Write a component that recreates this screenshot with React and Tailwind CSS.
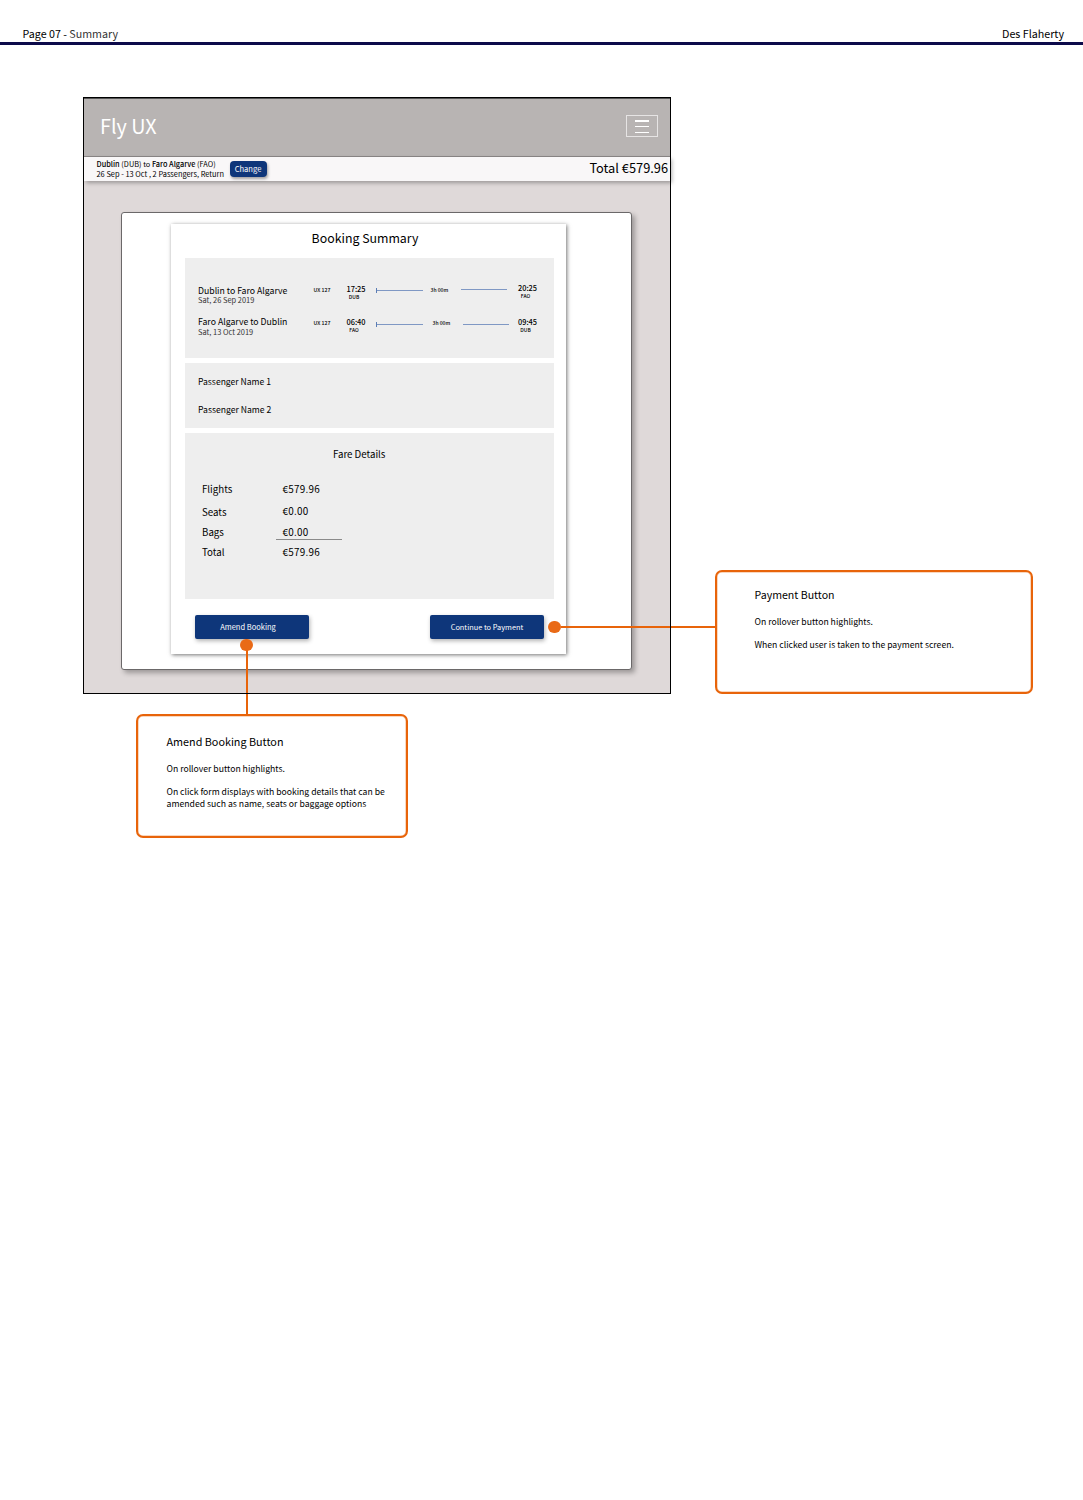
function T({ className = "", children }) {
  return <div className={`whitespace-nowrap leading-[12px] ${className}`}>{children}</div>;
}

function Leg({ name, date, dateGap, from, fromCode, to, toCode, nums }) {
  return (
    <div className="flex h-[24px] items-start">
      <div className="w-[115.5px]">
        <T className={`text-[8.71px] ${nums.name}`}>{name}</T>
        <T className={`text-[7.45px] text-[#333] ${dateGap}`}>{date}</T>
      </div>
      <T className={`w-[31px] text-[5.19px] font-medium ${nums.code}`}>UX 127</T>
      <div className={`flex w-[23px] flex-col items-center ${nums.dep}`}>
        <T className="text-[7.4px] font-medium">{from}</T>
        <T className={`-ml-1 text-[4.95px] font-medium ${nums.depCode}`}>{fromCode}</T>
      </div>
      <div className={`ml-[8px] flex h-[5px] w-[47px] items-center border-l border-[#5b7db5] ${nums.line1}`}>
        <div className="h-px w-full bg-[#7f98c4]" />
      </div>
      <T className={`w-[30px] text-[5.06px] font-medium ${nums.dur}`}>3h 00m</T>
      <div className={`h-px w-[46px] bg-[#7f98c4] ${nums.line2}`} />
      <div className={`flex w-[22px] flex-col items-center ${nums.arr}`}>
        <T className="text-[7.4px] font-medium">{to}</T>
        <T className={`-ml-1 text-[4.95px] font-medium ${nums.arrCode}`}>{toCode}</T>
      </div>
    </div>
  );
}

function Fare({ label, amount, className = "", amountClass = "" }) {
  return (
    <div className={`flex h-[12px] ${className}`}>
      <T className="w-[80.5px] text-[9.73px]">{label}</T>
      <T className={`text-[9.9px] tracking-[0.25px] ${amountClass}`}>{amount}</T>
    </div>
  );
}

export default function App() {
  return (
    <div className="h-[1500px] w-[1083px] overflow-hidden bg-white font-['Noto_Sans_CJK_SC','Noto_Sans',sans-serif] text-black">
      <header className="flex h-[45px] items-start justify-between border-b-[3px] border-[#0c0a4a] pr-[19px] pl-[22.5px] pt-[28px]">
        <T className="text-[10.7px]">Page 07 - <span className="text-[#333]">Summary</span></T>
        <T className="text-[10.72px]">Des Flaherty</T>
      </header>

      <div className="mt-[52px] flex items-start pl-[83px]">
        <main className="relative h-[597px] w-[588px] shrink-0 border border-black bg-[#dfd9d9]">
          <div className="pointer-events-none absolute -inset-px z-20 border border-black" />
          <div className="flex h-[59px] items-start justify-between border-t border-b border-t-[#555] border-b-[#8c8888] bg-[#b8b4b3] pr-[12px] pl-[16px]">
            <div className="mt-[12px] text-[19.8px] leading-[30px] whitespace-nowrap text-white">Fly UX</div>
            <div className="mt-[16px] flex h-[22px] w-[32px] flex-col items-center justify-between border border-[#e6e4e4] pt-[4px] pb-[3px]">
              <div className="h-[1.5px] w-[14px] bg-white" />
              <div className="h-[1.5px] w-[14px] bg-white" />
              <div className="h-[1.5px] w-[14px] bg-white" />
            </div>
          </div>
          <div className="flex h-[24px] items-start bg-[#f9f7f8] pl-[12.5px] shadow-[2px_2px_4px_rgba(0,0,0,0.3)]">
            <div className="w-[133px] pt-[1px]">
              <T className="text-[7.35px]">
                <span className="font-medium">Dublin</span> (DUB) to <span className="font-medium">Faro Algarve</span> (FAO)
              </T>
              <T className="mt-[-2px] text-[7.41px]">26 Sep - 13 Oct , 2 Passengers, Return</T>
            </div>
            <button className="mt-[4px] h-[16px] w-[37px] rounded-[4px] bg-[#0e367a] text-[7.6px] leading-[16px] text-white shadow-[1px_2px_3px_rgba(0,0,0,0.35)]">Change</button>
            <T className="mt-[5px] ml-auto pr-[2px] text-[12.8px]">Total €579.96</T>
          </div>

          <div className="mt-[31px] ml-[37px] h-[458px] w-[511px] rounded-[3px] border border-[#6b6869] bg-white pt-[11px] pl-[49px] shadow-[3px_3px_5px_rgba(0,0,0,0.3)]">
            <div className="h-[430px] w-[395px] bg-white px-[14px] shadow-[1px_1px_4px_rgba(0,0,0,0.55)]">
              <h1 className="h-[34px] pt-[4px] pr-[7px] text-center text-[12.35px] leading-[20px]">Booking Summary</h1>
              <section className="h-[100px] w-[369px] bg-[#eeeeee] pt-[26px] pl-[13px]">
                <Leg
                  name="Dublin to Faro Algarve" date="Sat, 26 Sep 2019" dateGap="mt-[-3px]"
                  from="17:25" fromCode="DUB" to="20:25" toCode="FAO"
                  nums={{ name: "mt-[1px]", code: "mt-0", dep: "mt-[-1px]", depCode: "mt-[-4px]", line1: "mt-[4px]", dur: "ml-[8px] mt-0", line2: "mt-[5px]", arr: "ml-[10px] mt-[-2px]", arrCode: "mt-[-4px]" }}
                />
                <div className="h-[8px]" />
                <Leg
                  name="Faro Algarve to Dublin" date="Sat, 13 Oct 2019" dateGap="mt-[-2px]"
                  from="06:40" fromCode="FAO" to="09:45" toCode="DUB"
                  nums={{ name: "mt-0", code: "mt-[1px]", dep: "mt-0", depCode: "mt-[-4px]", line1: "mt-[6px]", dur: "ml-[10px] mt-[1px]", line2: "mt-[8px]", arr: "ml-[8px] mt-0", arrCode: "mt-[-4px]" }}
                />
              </section>
              <section className="mt-[5px] h-[65px] w-[369px] bg-[#eeeeee] pt-[12px] pl-[13px]">
                <T className="text-[8.58px]">Passenger Name 1</T>
                <T className="mt-[16px] text-[8.62px]">Passenger Name 2</T>
              </section>
              <section className="mt-[5px] h-[166px] w-[369px] bg-[#eeeeee] pt-[15px] pl-[17px]">
                <T className="pl-[131px] text-[9.7px]">Fare Details</T>
                <Fare className="mt-[23px]" label="Flights" amount="€579.96" />
                <Fare className="mt-[11px]" label="Seats" amount="€0.00" amountClass="mt-[-1px]" />
                <Fare className="mt-[8px]" label="Bags" amount="€0.00" />
                <div className="mt-px ml-[74px] h-px w-[66px] bg-[#8a8a8a]" />
                <Fare className="mt-[6px]" label="Total" amount="€579.96" />
              </section>
              <div className="mt-[16px] flex justify-between pr-[8px] pl-[10px]">
                <button className="h-[24px] w-[114px] rounded-[2px] bg-[#0e367a] pr-[8px] text-[7.51px] leading-[24px] text-white shadow-[1px_2px_4px_rgba(0,0,0,0.3)]">Amend Booking</button>
                <button className="h-[24px] w-[114px] rounded-[2px] bg-[#0e367a] text-[7.4px] leading-[24px] text-white shadow-[1px_2px_4px_rgba(0,0,0,0.3)]">Continue to Payment</button>
              </div>
            </div>
          </div>
        </main>

        <aside className="relative mt-[473px] ml-[44px] h-[124px] w-[318px] rounded-[7px] border-2 border-[#e8640a] pt-[17px] pl-[37.5px] shadow-[inset_0_0_0_0.5px_#f3b080]">
          <div className="absolute top-[54px] right-full h-[2px] w-[156px] bg-[#e8640a]" />
          <div className="absolute top-[49px] left-[-169px] h-[12px] w-[13px] rounded-full bg-[#e96a17]" />
          <T className="text-[10.6px]">Payment Button</T>
          <T className="mt-[14px] text-[8.67px]">On rollover button highlights.</T>
          <T className="mt-[11px] text-[8.65px]">When clicked user is taken to the payment screen.</T>
        </aside>
      </div>

      <aside className="relative mt-[20px] ml-[136px] h-[124px] w-[272px] rounded-[7px] border-2 border-[#e8640a] pt-[19px] pl-[28.5px] shadow-[inset_0_0_0_0.5px_#f3b080]">
        <div className="absolute bottom-full left-[107.5px] h-[72px] w-[2px] bg-[#e8640a]" />
        <div className="absolute top-[-77px] left-[102px] h-[12px] w-[13px] rounded-full bg-[#e96a17]" />
        <T className="text-[10.8px]">Amend Booking Button</T>
        <T className="mt-[15px] text-[8.67px]">On rollover button highlights.</T>
        <T className="mt-[11px] text-[8.65px]">On click form displays with booking details that can be</T>
        <T className="text-[8.69px]">amended such as name, seats or baggage options</T>
      </aside>
    </div>
  );
}
